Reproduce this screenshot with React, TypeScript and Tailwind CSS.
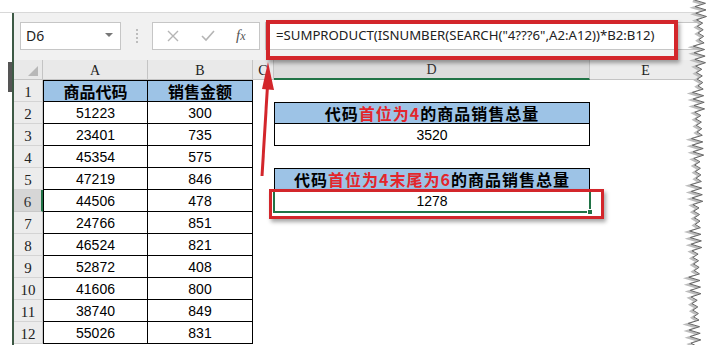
import React from "react";

const data: [string, string][] = [
  ["51223", "300"],
  ["23401", "735"],
  ["45354", "575"],
  ["47219", "846"],
  ["44506", "478"],
  ["24766", "851"],
  ["46524", "821"],
  ["52872", "408"],
  ["41606", "800"],
  ["38740", "849"],
  ["55026", "831"],
];

const cjk = { fontFamily: '"Noto Sans CJK SC", "Noto Sans", sans-serif' };
const arial = { fontFamily: '"Liberation Sans", Arial, sans-serif' };
const serif = { fontFamily: '"Liberation Serif", "DejaVu Serif", serif' };
const ui = { fontFamily: '"Noto Sans", "Open Sans", sans-serif' };

function Title1() {
  return (
    <span className="font-bold text-[16px] leading-none tracking-[1px] text-black" style={cjk}>
      代码<span className="text-[#e3262c]">首位为4</span>的商品销售总量
    </span>
  );
}
function Title2() {
  return (
    <span className="font-bold text-[16px] leading-none tracking-[1px] text-black" style={cjk}>
      代码<span className="text-[#e3262c]">首位为4末尾为6</span>的商品销售总量
    </span>
  );
}

function DCell({ row }: { row: number }) {
  if (row === 2)
    return (
      <div className="h-[22px] overflow-hidden border border-black bg-[#9dc3e6] flex items-center justify-center">
        <Title1 />
      </div>
    );
  if (row === 3)
    return (
      <div className="h-[22px] border-x border-b border-black bg-white flex items-center justify-center pt-[1px] text-[14px] leading-none text-black" style={arial}>
        3520
      </div>
    );
  if (row === 5)
    return (
      <div className="h-[22px] overflow-hidden border border-black bg-[#9dc3e6] flex items-center justify-center">
        <Title2 />
      </div>
    );
  if (row === 6)
    return (
      <div className="relative h-[22px] border-x border-b border-black bg-white flex items-center justify-center pt-[1px] text-[14px] leading-none text-black" style={arial}>
        1278
        <div className="absolute -left-[2px] -right-[2px] -top-[1px] -bottom-[2px] border-2 border-[#217346]" />
        <div className="absolute -right-[4px] -bottom-[4px] w-[6px] h-[6px] bg-[#217346] border border-white" />
      </div>
    );
  return <div className="h-[22px] bg-white" />;
}

function Row({ n }: { n: number }) {
  const sel = n === 6;
  const a = n === 1 ? "商品代码" : data[n - 2][0];
  const b = n === 1 ? "销售金额" : data[n - 2][1];
  const head = n === 1;
  return (
    <div className="grid grid-cols-[29px_105px_105px_21px_316px_1fr] grid-rows-[22px] h-[22px] shrink-0 leading-none">
      <div
        className={
          sel
            ? "h-[22px] bg-[#d6d6d6] border-r-2 border-r-[#217346] border-b border-b-[#c8c8c8] flex items-center justify-center pt-[4px] text-[15px] text-[#333]"
            : "h-[22px] bg-[#ececec] border-r border-r-[#c8c8c8] border-b border-b-[#d4d4d4] flex items-center justify-center pt-[4px] text-[15px] text-[#222]"
        }
        style={serif}
      >
        {n}
      </div>
      <div
        className={
          head
            ? "h-[22px] border border-black bg-[#9dc3e6] flex items-center justify-center font-bold text-[16px] text-black"
            : "h-[22px] border-x border-b border-black bg-white flex items-center justify-center pt-[1px] text-[14px] text-black"
        }
        style={head ? cjk : arial}
      >
        {a}
      </div>
      <div
        className={
          head
            ? "h-[22px] border-r border-y border-black bg-[#9dc3e6] flex items-center justify-center font-bold text-[16px] text-black"
            : "h-[22px] border-r border-b border-black bg-white flex items-center justify-center pt-[1px] text-[14px] text-black"
        }
        style={head ? cjk : arial}
      >
        {b}
      </div>
      <div className="h-[22px] bg-white" />
      <DCell row={n} />
      <div className="h-[22px] bg-white" />
    </div>
  );
}

function TornEdge() {
  const pts: string[] = [];
  for (let i = 0; i <= 110; i++) {
    const y = i * 3.3;
    const j = ((i * 53) % 7) - 3;
    const base = 700 - Math.min(6, y / 50);
    const x = i % 2 === 0 ? base - 3 + j * 0.9 : base + 5 + j * 0.6;
    pts.push(`${x.toFixed(1)},${y.toFixed(1)}`);
  }
  const line = pts.join(" ");
  const shadow = pts
    .map((p) => {
      const [x, y] = p.split(",").map(Number);
      return `${x - 1.5},${y + 1}`;
    })
    .join(" ");
  return (
    <svg className="absolute left-0 top-0 pointer-events-none" width="719" height="345">
      <polyline points={shadow} fill="none" stroke="#bdbdbd" strokeWidth="2.5" />
      <polygon points={`719,0 ${line} 719,360`} fill="#ffffff" />
      <polyline points={line} fill="none" stroke="#666" strokeWidth="1" />
    </svg>
  );
}

export default function App() {
  return (
    <div className="relative w-[719px] h-[345px] overflow-hidden bg-white leading-none">
      <div className="h-[13px] bg-white border-b border-[#d8d8d8]" />
      <div className="flex h-[332px]">
        <div className="relative w-[14px] shrink-0 border-r-2 border-r-[#3d5a45] bg-white">
          <div className="absolute right-0 top-[49px] w-[4px] h-[30px] bg-[#555]" />
        </div>
        <div className="flex-1 flex flex-col">
          {/* formula bar */}
          <div className="h-[47px] shrink-0 bg-[#f1f1f1] flex items-center pb-[2px]">
            <div className="ml-[6px] w-[101px] h-[28px] bg-white border border-[#c6c6c6] flex items-center justify-between px-[5px]">
              <span className="text-[14px] text-[#222]" style={ui}>D6</span>
              <svg width="8" height="5" className="mr-[2px]">
                <polygon points="0,0 8,0 4,4" fill="#777" />
              </svg>
            </div>
            <div className="w-[31px] flex flex-col items-center gap-[2px]">
              <div className="w-[2px] h-[2px] bg-[#bdbdbd]" />
              <div className="w-[2px] h-[2px] bg-[#bdbdbd]" />
              <div className="w-[2px] h-[2px] bg-[#bdbdbd]" />
              <div className="w-[2px] h-[2px] bg-[#bdbdbd]" />
            </div>
            <div className="w-[108px] h-[28px] bg-white border border-[#c6c6c6] flex items-center">
              <svg width="12" height="12" className="ml-[14px]">
                <path d="M1 1 L11 11 M11 1 L1 11" stroke="#b5b5b5" strokeWidth="1.4" />
              </svg>
              <svg width="14" height="12" className="ml-[22px]">
                <path d="M1 6 L5 10 L13 1" stroke="#b5b5b5" strokeWidth="1.6" fill="none" />
              </svg>
              <span className="ml-[21px] italic text-[15px] text-[#555]" style={serif}>
                f<span className="text-[12px]">x</span>
              </span>
            </div>
            <div className="ml-[5px] flex-1 h-[28px] bg-white border border-[#c6c6c6] flex items-center pl-[10px]">
              <span className="text-[13.2px] text-[#222] whitespace-nowrap" style={ui}>
                =SUMPRODUCT(ISNUMBER(SEARCH("4???6",A2:A12))*B2:B12)
              </span>
            </div>
          </div>
          {/* column header */}
          <div className="grid grid-cols-[29px_105px_105px_21px_316px_1fr] grid-rows-[20px] h-[20px] shrink-0">
            <div className="relative bg-[#e9e9e9] border-r border-b border-[#c4c4c4]">
              <svg width="10" height="10" className="absolute right-[4px] bottom-[3px]">
                <polygon points="10,0 10,10 0,10" fill="#b8b8b8" />
              </svg>
            </div>
            <div className="bg-[#e9e9e9] border-r border-b border-[#c4c4c4] flex items-center justify-center pt-[2px] text-[14px] text-[#222]" style={serif}>A</div>
            <div className="bg-[#e9e9e9] border-r border-b border-[#c4c4c4] flex items-center justify-center pt-[2px] text-[14px] text-[#222]" style={serif}>B</div>
            <div className="bg-[#e9e9e9] border-r border-b border-[#c4c4c4] flex items-center justify-center pt-[2px] text-[14px] text-[#222]" style={serif}>C</div>
            <div className="bg-[#dcdcdc] border-r border-r-[#c4c4c4] border-b-2 border-b-[#217346] flex items-center justify-center pt-[2px] text-[14px] text-[#333]" style={serif}>D</div>
            <div className="bg-[#ececec] border-b border-[#c4c4c4] flex items-center justify-center pt-[2px] text-[14px] text-[#222] pr-[18px]" style={serif}>E</div>
          </div>
          {Array.from({ length: 12 }, (_, i) => (
            <Row key={i} n={i + 1} />
          ))}
        </div>
      </div>

      {/* red annotation: formula */}
      <div className="absolute left-[266px] top-[20px] w-[412px] h-[40px] border-4 border-[#d3262b] shadow-[2px_3px_4px_rgba(0,0,0,0.35)]" />
      {/* red annotation: D6 */}
      <div className="absolute left-[269px] top-[189px] w-[335px] h-[30px] border-[3px] border-[#d3262b] shadow-[2px_3px_4px_rgba(0,0,0,0.35)]" />
      {/* red arrow */}
      <svg className="absolute left-0 top-0 pointer-events-none" width="719" height="345">
        <line x1="262" y1="176" x2="267.5" y2="86" stroke="#d3262b" strokeWidth="3" />
        <polygon points="268,62 274,90 262,89" fill="#d3262b" />
      </svg>
      <TornEdge />
    </div>
  );
}
